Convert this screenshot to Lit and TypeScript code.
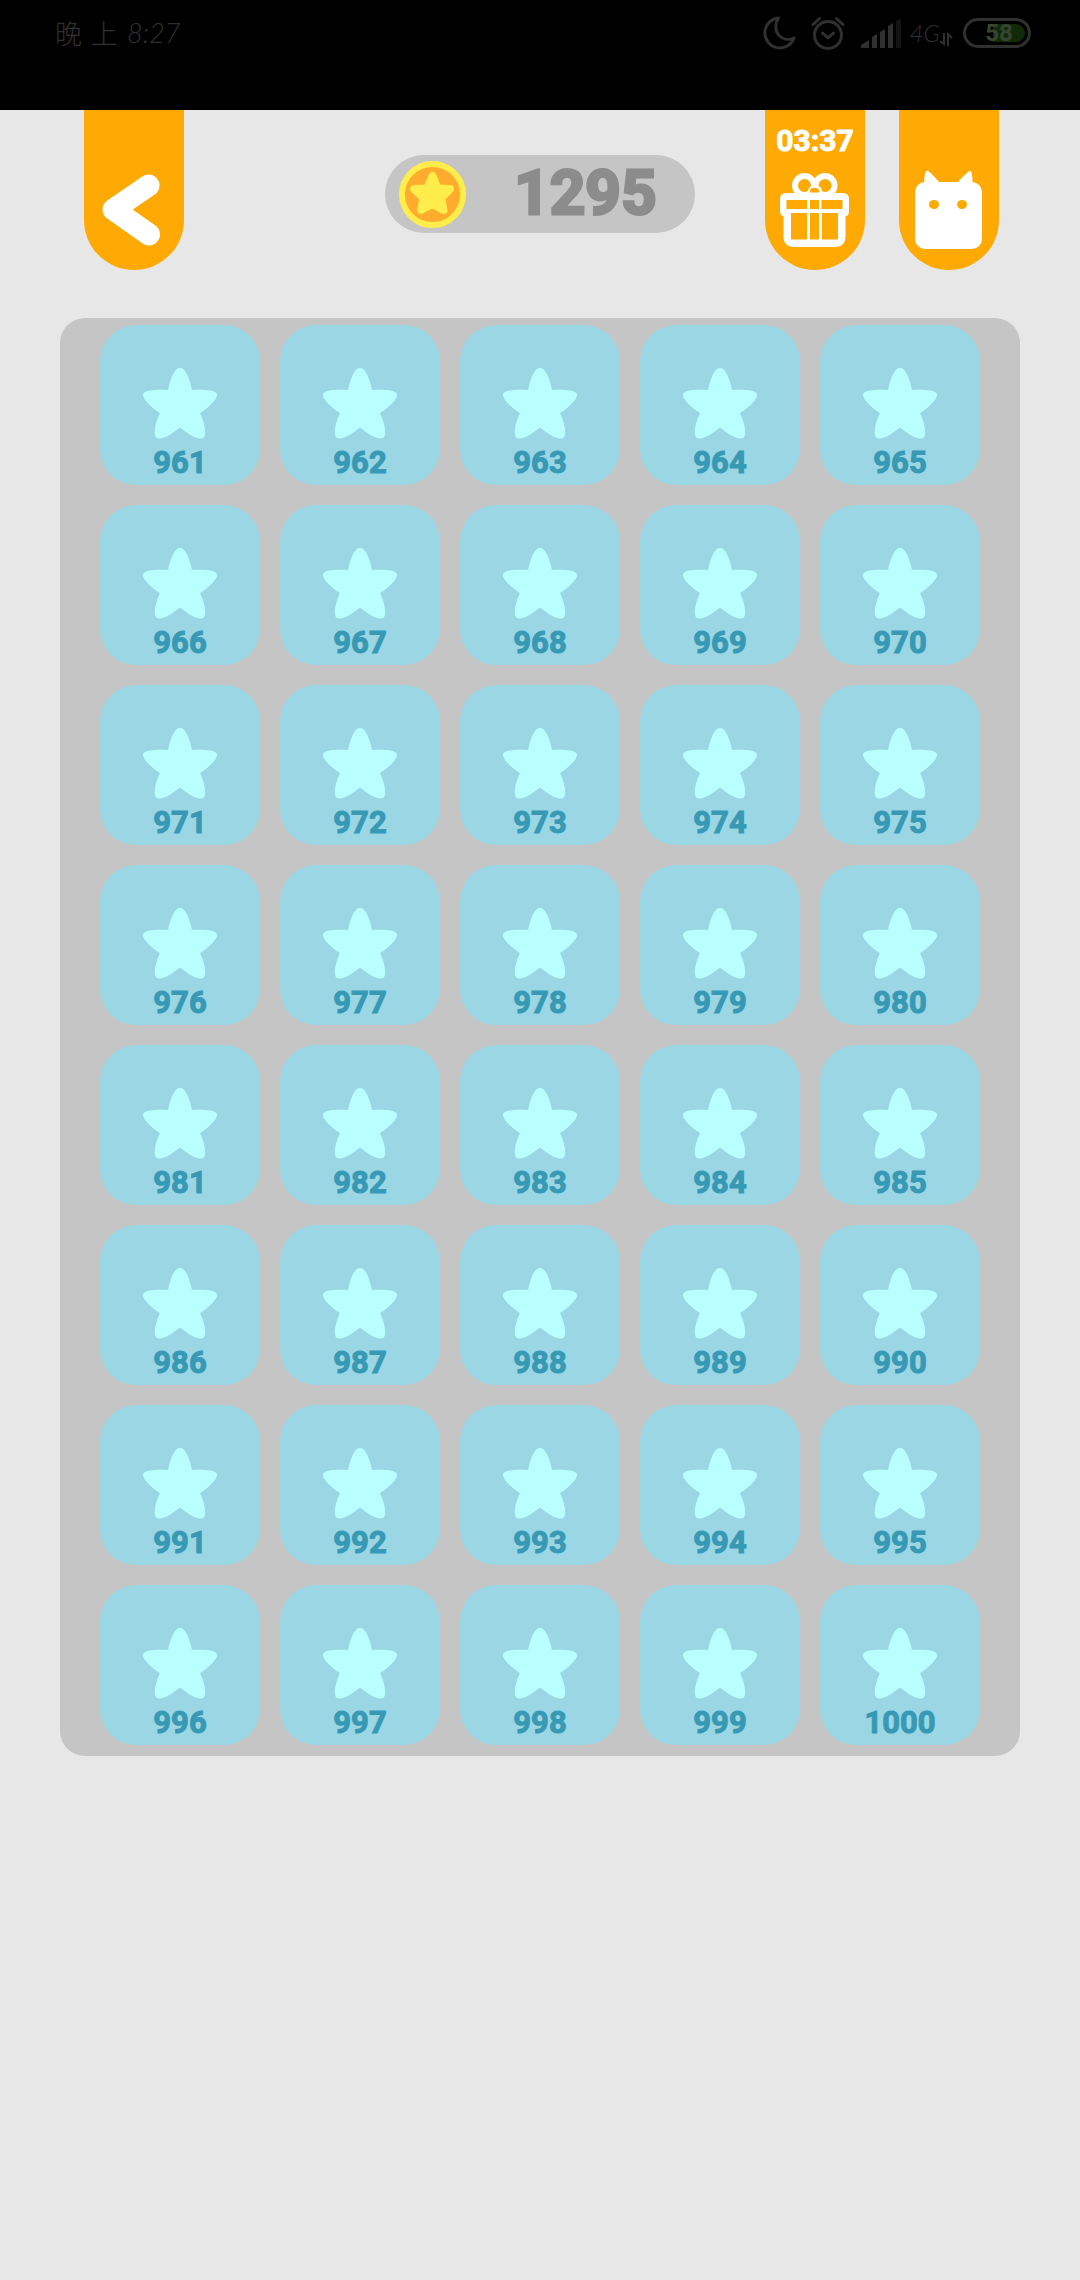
import { LitElement, html, svg, css } from "lit";
import { customElement, property } from "lit/decorators.js";

const FIRST_LEVEL = 961;
const LAST_LEVEL = 1000;

@customElement("status-bar")
class StatusBar extends LitElement {
  static styles = css`
    :host {
      display: block;
    }
    .bar {
      box-sizing: border-box;
      height: 110px;
      padding: 12px 49px 0 55px;
      background: #000;
      color: #303030;
      display: flex;
      justify-content: space-between;
      align-items: flex-start;
    }
    .clock {
      display: flex;
      gap: 9px;
      font: 300 27px/42px "Noto Sans CJK SC", sans-serif;
    }
    .digits {
      font-family: "Lato", sans-serif;
      font-style: italic;
    }
    .icons {
      display: flex;
      align-items: center;
      height: 42px;
    }
    .icons svg {
      display: block;
      flex: none;
    }
    .moon {
      margin-right: 15px;
    }
    .alarm {
      margin-right: 16px;
    }
    .signal {
      margin-right: 8px;
    }
    .network {
      font: italic 300 24px/36px "Lato", sans-serif;
    }
    .arrows {
      margin-right: 10px;
      align-self: flex-end;
      margin-bottom: 8px;
    }
    .battery {
      box-sizing: border-box;
      width: 68px;
      height: 30px;
      padding: 3px;
      border: 3px solid #303030;
      border-radius: 15px;
      display: grid;
    }
    .charge {
      grid-area: 1 / 1;
      justify-self: end;
      width: 58%;
      background: #132a08;
      border-radius: 0 9px 9px 0;
    }
    .percent {
      grid-area: 1 / 1;
      padding-left: 4px;
      text-align: center;
      font: 700 24px/18px "Roboto", sans-serif;
      color: #36452f;
    }
  `;

  render() {
    return html`
      <div class="bar">
        <time class="clock"><span>晚</span><span>上</span><span class="digits">8:27</span></time>
        <div class="icons">
          <svg class="moon" width="33" height="34" viewBox="0 0 33 34" fill="none" stroke="#303030" stroke-width="3" stroke-linejoin="round" aria-hidden="true">
            <path d="M15.500 2A15 15 0 1 0 31 22C26 24.500 20 23.500 16 19.500C12 15.500 11.500 8 15.500 2Z" />
          </svg>
          <svg class="alarm" width="34" height="34" viewBox="0 0 34 34" fill="none" stroke="#303030" stroke-width="3" stroke-linecap="round" aria-hidden="true">
            <circle cx="17" cy="19" r="13.500" />
            <path d="M2 8.500L8.500 2.500M32 8.500L25.500 2.500" />
            <path d="M11.500 17L17 22L22.500 17" stroke-linejoin="round" />
          </svg>
          <svg class="signal" width="41" height="29" viewBox="0 0 41 29" fill="#303030" aria-hidden="true">
            <path d="M0 29V26L8 21V29ZM11 29V18L16 15V29ZM19 29V13L24 10V29ZM27 29V7L32 4V29Z" />
            <path d="M35 29V2L40 0V29Z" fill="#141414" />
          </svg>
          <span class="network">4G</span>
          <svg class="arrows" width="13" height="14" viewBox="0 0 13 14" fill="none" stroke="#303030" stroke-width="2" aria-hidden="true">
            <path d="M4 1V12L0 9M8 14V2L12 6" />
          </svg>
          <div class="battery">
            <div class="charge"></div>
            <span class="percent">58</span>
          </div>
        </div>
      </div>
    `;
  }
}

@customElement("ribbon-button")
class RibbonButton extends LitElement {
  @property() icon = "back";
  @property() label = "";
  @property() time = "";

  static styles = css`
    :host {
      display: block;
    }
    .ribbon {
      width: 100px;
      height: 160px;
      padding: 0;
      border: 0;
      border-radius: 0 0 50px 50px;
      background: #ffaa04;
      color: #fff;
      display: flex;
      flex-direction: column;
      align-items: center;
      cursor: pointer;
    }
    .time {
      padding-top: 19px;
      font: 700 30px/24px "Roboto", sans-serif;
      -webkit-text-stroke: 1px #fff;
    }
    .icon {
      display: block;
      margin-top: auto;
    }
  `;

  private drawing() {
    if (this.icon === "gift") {
      return svg`
        <g fill="none" stroke="#fff" stroke-width="6">
          <circle cx="39.500" cy="75.500" r="9.500" />
          <circle cx="60" cy="75.500" r="9.500" />
        </g>
        <rect x="43" y="76" width="14" height="14" rx="5" fill="#fff" />
        <path fill="#fff" d="M21 83H78Q84 83 84 89V101Q84 106 80.500 106V126Q80.500 137 69.500 137H29.500Q18.500 137 18.500 126V106Q15 106 15 101V89Q15 83 21 83Z" />
        <path fill="#ffaa04" d="M21.500 90H42V99H21.500ZM45 90H54V99H45ZM56.500 90H77.500V99H56.500ZM26 103H42V129.500H26ZM45 103H54V129.500H45ZM57 103H73V129.500H57ZM45 82.500V81Q45 78 48 78H51Q54 78 54 81V82.500Z" />
      `;
    }
    if (this.icon === "cat") {
      return svg`
        <path fill="#fff" d="M25 75C25 70 25.500 65 26.500 62Q27.500 60 30 61.500Q35 66 41 73H58Q64 66 69.500 61.500Q72 60 72.500 62.500Q74 68 73.500 75Z" />
        <rect x="16" y="72" width="67" height="67" rx="10" fill="#fff" />
        <ellipse cx="35" cy="94.500" rx="5" ry="4.500" fill="#ffaa04" />
        <ellipse cx="63" cy="94.500" rx="5" ry="4.500" fill="#ffaa04" />
      `;
    }
    return svg`
      <path d="M64.500 75.500L29.500 99.500L65 124.500" fill="none" stroke="#fff" stroke-width="22" stroke-linecap="round" stroke-linejoin="round" />
    `;
  }

  render() {
    return html`
      <button class="ribbon" type="button" aria-label=${this.label}>
        ${this.time ? html`<span class="time">${this.time}</span>` : ""}
        <svg class="icon" width="100" height="110" viewBox="0 50 100 110" aria-hidden="true">${this.drawing()}</svg>
      </button>
    `;
  }
}

@customElement("coin-counter")
class CoinCounter extends LitElement {
  @property({ type: Number }) amount = 0;

  static styles = css`
    :host {
      display: block;
    }
    .pill {
      box-sizing: border-box;
      width: 310px;
      height: 78px;
      padding: 0 38px 0 14px;
      border-radius: 39px;
      background: #c5c5c5;
      display: flex;
      align-items: center;
      justify-content: space-between;
    }
    .amount {
      font: 700 62px/76px "Roboto", sans-serif;
      padding-bottom: 2px;
      color: #8c8c8c;
      -webkit-text-stroke: 3px #8c8c8c;
      stroke-linejoin: round;
    }
  `;

  render() {
    return html`
      <div class="pill">
        <svg width="67" height="67" viewBox="0 0 67 67" aria-hidden="true">
          <circle cx="33.500" cy="33.500" r="30.500" fill="#ffac2c" stroke="#ffed4c" stroke-width="6" />
          <path d="M33.500 15L38.500 27.500L51 28L42 37L44.500 49L33.500 43L22 49L24.500 37L15 28L28 27.500Z" fill="#ffed4c" stroke="#ffed4c" stroke-width="8" stroke-linejoin="round" />
        </svg>
        <span class="amount">${this.amount}</span>
      </div>
    `;
  }
}

@customElement("level-grid")
class LevelGrid extends LitElement {
  @property({ type: Number }) first = 1;
  @property({ type: Number }) last = 1;

  static styles = css`
    :host {
      display: block;
    }
    .panel {
      padding: 7px 40px 11px;
      border-radius: 25px;
      background: #c5c5c5;
      display: grid;
      grid-template-columns: repeat(5, 1fr);
      gap: 20px;
    }
    .level {
      box-sizing: border-box;
      aspect-ratio: 1;
      min-width: 0;
      padding: 0 0 6px;
      border: 0;
      border-radius: 36px;
      background: #9ad6e3;
      display: flex;
      flex-direction: column;
      align-items: center;
      justify-content: flex-end;
      gap: 8px;
      cursor: pointer;
    }
    .star {
      display: block;
    }
    .number {
      font: 700 31px/32px "Roboto", sans-serif;
      color: #3899b4;
      -webkit-text-stroke: 1px #3899b4;
    }
  `;

  render() {
    const levels = Array.from({ length: this.last - this.first + 1 }, (_, i) => this.first + i);
    return html`
      <main class="panel">
        ${levels.map(
          (level) => html`
            <button class="level" type="button">
              <svg class="star" width="74" height="71" viewBox="43 43 74 71" aria-hidden="true">
                <path
                  fill="#baffff"
                  d="M68 65C71 51 75 43 80 43S89 51 92 65C105 64.500 117 65 117 70C117 74 110 82 100 88C106 101 106.500 111 103 113C99 115 91 111.500 80 102.500C69 111.500 61 115 57 113C53.500 111 54 101 60 88C50 82 43 74 43 70C43 65 55 64.500 68 65Z"
                />
              </svg>
              <span class="number">${level}</span>
            </button>
          `
        )}
      </main>
    `;
  }
}

@customElement("app-root")
class AppRoot extends LitElement {
  static styles = css`
    :host {
      display: block;
      min-height: 100vh;
      background: #e7e7e7;
    }
    .header {
      display: grid;
      grid-template-columns: 1fr auto 1fr;
      align-items: start;
      padding: 0 81px 0 84px;
    }
    .coins {
      padding: 45px 4px 0 0;
    }
    .actions {
      display: flex;
      justify-content: flex-end;
      gap: 34px;
    }
    .levels {
      margin: 48px 60px 0;
    }
  `;

  render() {
    return html`
      <status-bar></status-bar>
      <header class="header">
        <ribbon-button icon="back" label="Back"></ribbon-button>
        <coin-counter class="coins" .amount=${1295}></coin-counter>
        <div class="actions">
          <ribbon-button icon="gift" label="Gift 03:37" time="03:37"></ribbon-button>
          <ribbon-button icon="cat" label="Cat"></ribbon-button>
        </div>
      </header>
      <level-grid class="levels" .first=${FIRST_LEVEL} .last=${LAST_LEVEL}></level-grid>
    `;
  }
}
